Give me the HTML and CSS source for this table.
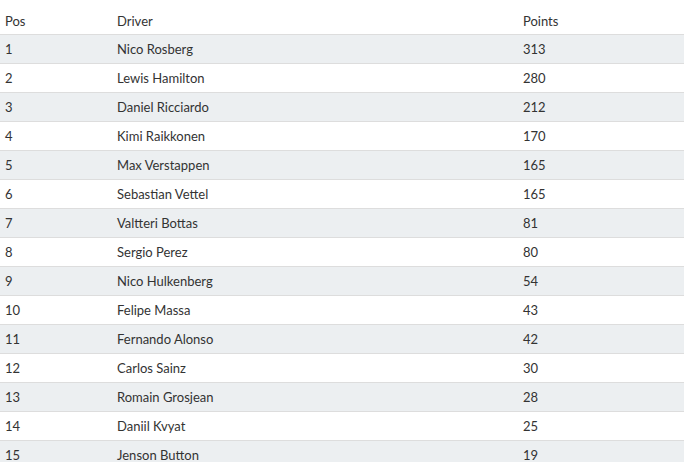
FILE: index.html
```html
<!DOCTYPE html>
<html>
<head>
<meta charset="utf-8">
<link rel="stylesheet" href="styles.css">
</head>
<body>
<table class="standings">
  <colgroup>
    <col class="c-pos">
    <col class="c-driver">
    <col class="c-points">
  </colgroup>
  <thead>
    <tr><th>Pos</th><th>Driver</th><th>Points</th></tr>
  </thead>
  <tbody>
    <tr><td>1</td><td>Nico Rosberg</td><td>313</td></tr>
    <tr><td>2</td><td>Lewis Hamilton</td><td>280</td></tr>
    <tr><td>3</td><td>Daniel Ricciardo</td><td>212</td></tr>
    <tr><td>4</td><td>Kimi Raikkonen</td><td>170</td></tr>
    <tr><td>5</td><td>Max Verstappen</td><td>165</td></tr>
    <tr><td>6</td><td>Sebastian Vettel</td><td>165</td></tr>
    <tr><td>7</td><td>Valtteri Bottas</td><td>81</td></tr>
    <tr><td>8</td><td>Sergio Perez</td><td>80</td></tr>
    <tr><td>9</td><td>Nico Hulkenberg</td><td>54</td></tr>
    <tr><td>10</td><td>Felipe Massa</td><td>43</td></tr>
    <tr><td>11</td><td>Fernando Alonso</td><td>42</td></tr>
    <tr><td>12</td><td>Carlos Sainz</td><td>30</td></tr>
    <tr><td>13</td><td>Romain Grosjean</td><td>28</td></tr>
    <tr><td>14</td><td>Daniil Kvyat</td><td>25</td></tr>
    <tr><td>15</td><td>Jenson Button</td><td>19</td></tr>
  </tbody>
</table>
</body>
</html>
```
FILE: styles.css
```css
html, body {
  margin: 0;
  padding: 0;
  background: #ffffff;
}
body {
  font-family: Lato, "Liberation Sans", sans-serif;
  font-size: 13px;
  color: #333333;
}
.standings {
  width: 684px;
  border-collapse: collapse;
  table-layout: fixed;
}
.c-pos { width: 112px; }
.c-driver { width: 406px; }
.c-points { width: 166px; }
.standings th {
  text-align: left;
  font-weight: normal;
  height: 34px;
  padding: 0 5px 5px;
  box-sizing: border-box;
  vertical-align: bottom;
  line-height: 16px;
}
.standings td {
  height: 29px;
  padding: 1px 5px 0;
  box-sizing: border-box;
  border-top: 1px solid #dddddd;
  vertical-align: middle;
  line-height: 16px;
}
.standings tbody tr:nth-child(odd) td {
  background: #eceff1;
}
```
